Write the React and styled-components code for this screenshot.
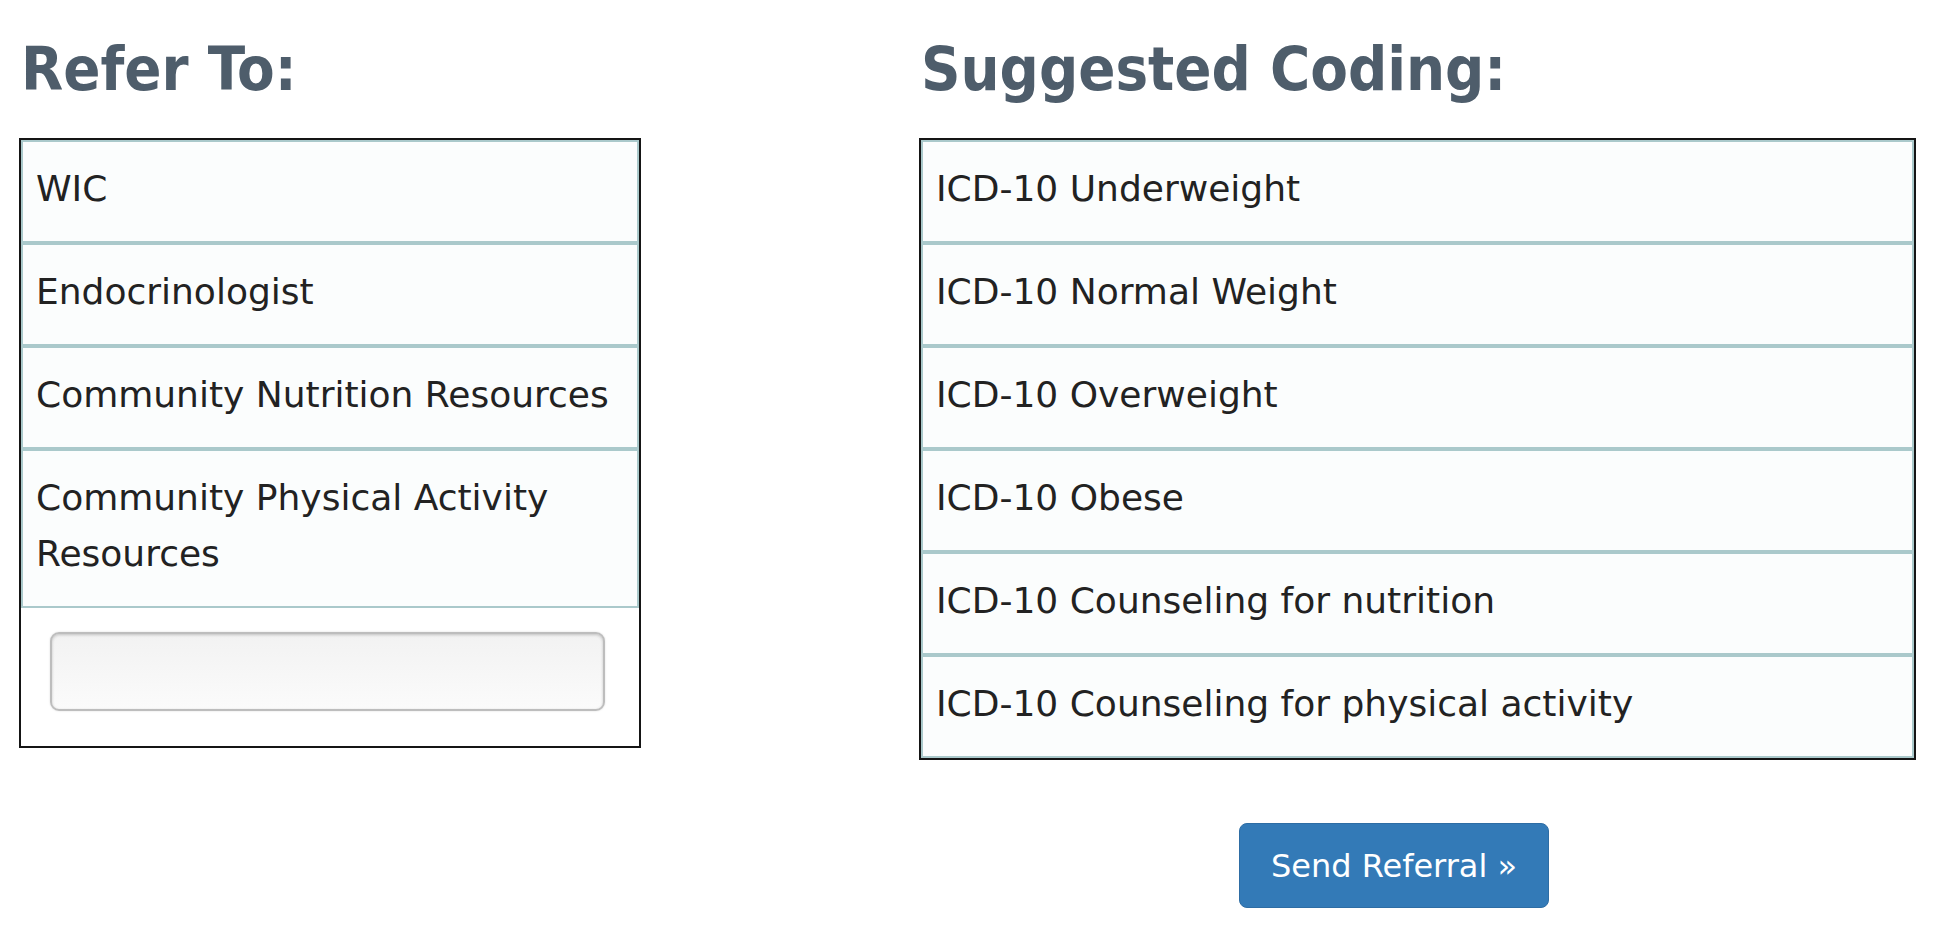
import React from 'react';
import styled, { createGlobalStyle } from 'styled-components';

const GlobalStyle = createGlobalStyle`
  body {
    margin: 0;
    background: #fff;
    font-family: "DejaVu Sans", "Liberation Sans", sans-serif;
    color: #222;
  }
`;

const Page = styled.div`
  display: flex;
  align-items: flex-start;
  gap: 278px;
  padding: 38px 0 0 19px;
`;

const Column = styled.section`
  width: ${(p) => p.width}px;
  display: flex;
  flex-direction: column;
`;

const Heading = styled.h2`
  margin: 0 0 38px 2px;
  font-family: "DejaVu Sans Condensed", "DejaVu Sans", sans-serif;
  font-stretch: condensed;
  font-size: 61px;
  line-height: 62px;
  font-weight: bold;
  color: #4e5d6b;
`;

const Panel = styled.div`
  border: 2px solid #151515;
  background: #fff;
`;

const List = styled.ul`
  list-style: none;
  margin: 0;
  padding: 0;
`;

const Item = styled.li`
  border: 2px solid #aac9cb;
  background: #fbfdfd;
  padding: 19px 13px 24px;
  font-size: 36px;
  line-height: 56px;
  color: #222;
`;

const InputRow = styled.div`
  padding: 24px 34px 35px 29px;
`;

const TextBox = styled.input`
  display: block;
  width: 100%;
  height: 79px;
  box-sizing: border-box;
  border: 2px solid #bdbdbd;
  border-radius: 9px;
  background: linear-gradient(#f2f2f2, #fbfbfb);
  box-shadow: inset 0 1px 3px rgba(0, 0, 0, 0.2), 0 0 2px rgba(0, 0, 0, 0.15);
  outline: none;
`;

const Actions = styled.div`
  display: flex;
  padding: 63px 0 0 320px;
`;

const SendButton = styled.button`
  width: 310px;
  height: 85px;
  border: 1px solid #2e6da4;
  border-radius: 8px;
  background: #337ab7;
  color: #fff;
  font-family: "DejaVu Sans", "Liberation Sans", sans-serif;
  font-size: 32px;
  cursor: pointer;
`;

const referrals = [
  'WIC',
  'Endocrinologist',
  'Community Nutrition Resources',
  'Community Physical Activity Resources',
];

const codes = [
  'ICD-10 Underweight',
  'ICD-10 Normal Weight',
  'ICD-10 Overweight',
  'ICD-10 Obese',
  'ICD-10 Counseling for nutrition',
  'ICD-10 Counseling for physical activity',
];

export default function App() {
  return (
    <>
      <GlobalStyle />
      <Page>
        <Column width={622}>
          <Heading>Refer To:</Heading>
          <Panel>
            <List>
              {referrals.map((r) => (
                <Item key={r}>{r}</Item>
              ))}
            </List>
            <InputRow>
              <TextBox type="text" />
            </InputRow>
          </Panel>
        </Column>
        <Column width={997}>
          <Heading>Suggested Coding:</Heading>
          <Panel>
            <List>
              {codes.map((c) => (
                <Item key={c}>{c}</Item>
              ))}
            </List>
          </Panel>
          <Actions>
            <SendButton>Send Referral »</SendButton>
          </Actions>
        </Column>
      </Page>
    </>
  );
}
